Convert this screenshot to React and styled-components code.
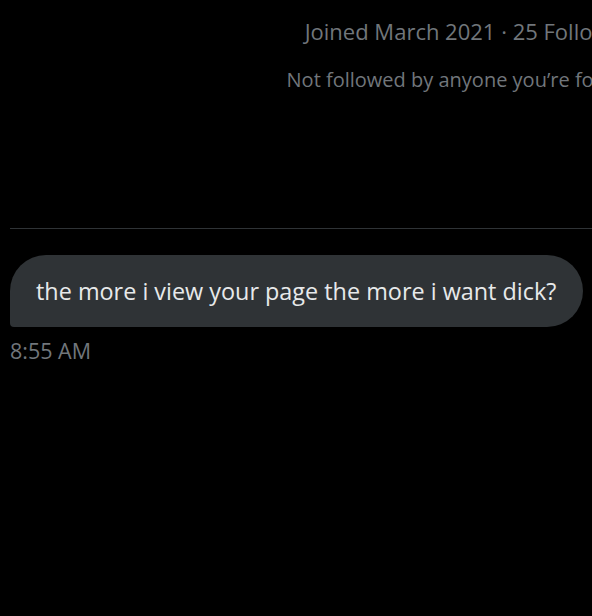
import React from 'react';
import styled, { createGlobalStyle } from 'styled-components';

const Global = createGlobalStyle`
  html, body { margin: 0; padding: 0; background: #000; }
  body { font-family: "Open Sans", "Liberation Sans", sans-serif; }
`;

const Page = styled.div`
  width: 592px;
  height: 616px;
  background: #000;
  overflow: hidden;
  display: flex;
  flex-direction: column;
`;

const Profile = styled.div`
  width: 760px;
  margin-left: 93px;
  padding-top: 17px;
  display: flex;
  flex-direction: column;
  align-items: center;
  gap: 21px;
  height: 228px;
  box-sizing: border-box;
`;

const Meta = styled.div`
  color: #71767b;
  font-size: ${p => p.$size}px;
  line-height: 28px;
  white-space: nowrap;
`;

const Divider = styled.div`
  margin-left: 10px;
  height: 1px;
  background: #2f3336;
`;

const Thread = styled.div`
  padding: 26px 9px 0 10px;
  display: flex;
  flex-direction: column;
  align-items: flex-start;
`;

const Bubble = styled.div`
  background: #2f3336;
  color: #e7e9ea;
  font-size: 23.4px;
  line-height: 28px;
  padding: 22px 26px;
  border-radius: 36px 36px 36px 4px;
  align-self: stretch;
`;

const Time = styled.div`
  margin-top: 12px;
  color: #71767b;
  font-size: 21.5px;
  line-height: 24px;
`;

export default function App() {
  return (
    <>
      <Global />
      <Page>
        <Profile>
          <Meta $size={22}>Joined March 2021 · 25 Followers</Meta>
          <Meta $size={20}>Not followed by anyone you’re following</Meta>
        </Profile>
        <Divider />
        <Thread>
          <Bubble>the more i view your page the more i want dick?</Bubble>
          <Time>8:55 AM</Time>
        </Thread>
      </Page>
    </>
  );
}
